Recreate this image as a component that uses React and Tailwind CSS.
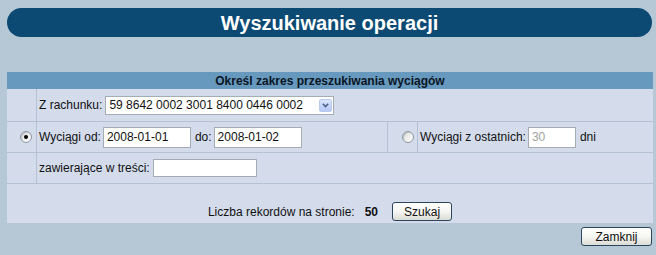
import React from "react";

function Radio({ checked }) {
    return (
        <span className="relative flex h-[12px] w-[12px] items-center justify-center rounded-full border border-[#8d97a5] bg-gradient-to-br from-[#dcdcdc] to-white shadow-[inset_1px_1px_1px_rgba(0,0,0,0.15)]">
            {checked && <span className="h-[4px] w-[4px] rounded-full bg-black" />}
        </span>
    );
}

function TextBox({ value, className = "", muted }) {
    return (
        <div
            className={
                "flex items-center border border-[#a5acb5] bg-white pl-[3px] " +
                (muted ? "text-[#a0a0a0] " : "text-[#111] ") +
                className
            }
        >
            {value}
        </div>
    );
}

function Button({ children, className = "" }) {
    return (
        <div
            className={
                "flex items-center justify-center rounded-[3px] border border-[#2c4660] bg-gradient-to-b from-white via-[#f6f6f3] to-[#dcdcd6] text-[12px] text-[#111] " +
                className
            }
        >
            {children}
        </div>
    );
}

export default function App() {
    return (
        <div
            className="h-[255px] w-[656px] bg-[#b6c7d6] pt-[8px]"
            style={{ fontFamily: '"Liberation Sans", Arial, sans-serif' }}
        >
            <div className="ml-[7px] flex h-[29px] w-[645px] items-center justify-center rounded-full bg-[#0c4a73]">
                <span className="text-[20px] font-bold leading-none text-white">
                    Wyszukiwanie operacji
                </span>
            </div>

            <div className="ml-[7px] mt-[35px] w-[646px] bg-[#d4dcec] text-[12px] text-[#111]">
                <div className="flex h-[17px] items-center justify-center bg-[#6798be] text-[12px] font-bold text-[#0a1624]">
                    Określ zakres przeszukiwania wyciągów
                </div>

                {/* rachunek */}
                <div className="flex h-[33px] border-b border-[#b4c1d3]">
                    <div className="w-[30px] border-r border-[#b4c1d3]" />
                    <div className="flex flex-1 items-center pl-[2px]">
                        <span>Z rachunku:</span>
                        <div className="ml-[3px] flex h-[19px] w-[229px] items-center justify-between border border-[#a5acb5] bg-white pl-[3px] pr-[1px]">
                            <span>59 8642 0002 3001 8400 0446 0002</span>
                            <span className="flex h-[13px] w-[13px] items-center justify-center rounded-[2px] border border-[#b9c9ef] bg-gradient-to-b from-[#dbe6fd] to-[#b4c8f6]">
                                <svg width="7" height="5" viewBox="0 0 7 5">
                                    <path d="M0.8 0.8 L3.5 3.6 L6.2 0.8" fill="none" stroke="#4d6185" strokeWidth="1.6" />
                                </svg>
                            </span>
                        </div>
                    </div>
                </div>

                {/* daty */}
                <div className="flex h-[31px] border-b border-[#b4c1d3]">
                    <div className="flex w-[30px] items-center justify-end border-r border-[#b4c1d3] pr-[4px]">
                        <Radio checked />
                    </div>
                    <div className="flex w-[351px] items-center border-r border-[#b4c1d3] pl-[2px]">
                        <span>Wyciągi od:</span>
                        <TextBox value="2008-01-01" className="ml-[2px] h-[21px] w-[88px]" />
                        <span className="ml-[4px]">do:</span>
                        <TextBox value="2008-01-02" className="ml-[2px] h-[21px] w-[88px]" />
                    </div>
                    <div className="flex w-[30px] items-center justify-end border-r border-[#b4c1d3] pr-[3px]">
                        <Radio />
                    </div>
                    <div className="flex flex-1 items-center pl-[2px]">
                        <span>Wyciągi z ostatnich:</span>
                        <TextBox value="30" muted className="ml-[2px] h-[21px] w-[48px]" />
                        <span className="ml-[4px]">dni</span>
                    </div>
                </div>

                {/* tresc */}
                <div className="flex h-[31px] border-b border-[#b4c1d3]">
                    <div className="w-[30px] border-r border-[#b4c1d3]" />
                    <div className="flex flex-1 items-center pl-[2px]">
                        <span>zawierające w treści:</span>
                        <TextBox value="" className="ml-[3px] h-[18px] w-[104px]" />
                    </div>
                </div>

                <div className="flex h-[39px] items-end justify-center pb-[2px]">
                    <div className="flex h-[19px] items-center">
                        <span>Liczba rekordów na stronie:</span>
                        <span className="ml-[10px] font-bold">50</span>
                        <Button className="ml-[14px] h-[19px] w-[60px]">Szukaj</Button>
                    </div>
                </div>
            </div>

            <div className="mt-[4px] flex w-[652px] justify-end">
                <Button className="h-[19px] w-[71px]">Zamknij</Button>
            </div>
        </div>
    );
}
